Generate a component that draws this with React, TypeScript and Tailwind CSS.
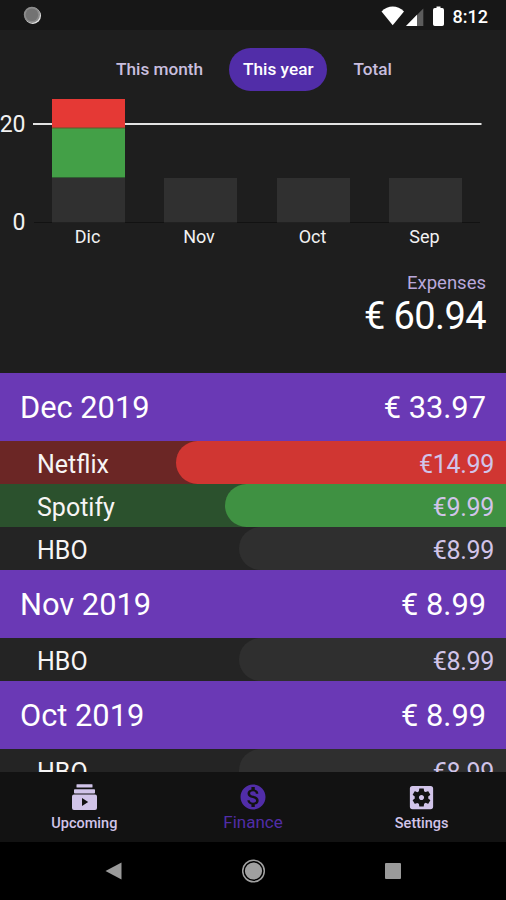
import { useState, type ReactNode } from 'react'
import { MdMonetizationOn, MdSettingsApplications } from 'react-icons/md'

interface Expense {
  name: string
  price: string
  rowClass: string
  pillClass: string
}

interface MonthGroup {
  label: string
  total: string
  expenses: Expense[]
}

interface Bar {
  label: string
  x: number
  labelX: number
}

const netflix: Expense = {
  name: 'Netflix',
  price: '€14.99',
  rowClass: 'bg-[#6b2625]',
  pillClass: 'w-[330px] bg-[#d03632]',
}

const spotify: Expense = {
  name: 'Spotify',
  price: '€9.99',
  rowClass: 'bg-[#2b512d]',
  pillClass: 'w-[281px] bg-[#3f9142]',
}

const hbo: Expense = {
  name: 'HBO',
  price: '€8.99',
  rowClass: 'bg-[#242424]',
  pillClass: 'w-[267px] bg-[#2f2f2f]',
}

const months: MonthGroup[] = [
  { label: 'Dec 2019', total: '€ 33.97', expenses: [netflix, spotify, hbo] },
  { label: 'Nov 2019', total: '€ 8.99', expenses: [hbo] },
  { label: 'Oct 2019', total: '€ 8.99', expenses: [hbo] },
]

const bars: Bar[] = [
  { label: 'Dic', x: 52, labelX: 87.5 },
  { label: 'Nov', x: 164, labelX: 199 },
  { label: 'Oct', x: 277, labelX: 312.5 },
  { label: 'Sep', x: 389, labelX: 424.5 },
]

const periods = ['This month', 'This year', 'Total']

function SubscriptionsIcon() {
  return (
    <svg width="30" height="30" viewBox="0 0 30 30" fill="currentColor">
      <rect x="7.500" y="2.200" width="16" height="3.200" rx="0.500" />
      <rect x="5" y="7.300" width="21" height="4.200" rx="0.800" />
      <path
        fillRule="evenodd"
        d="M5 12.500h21q2 0 2 2v11.500q0 2-2 2H5q-2 0-2-2V14.500q0-2 2-2zM13 16v8l6.200-4z"
      />
    </svg>
  )
}

function StatusBar() {
  return (
    <header className="flex h-[30px] shrink-0 items-center justify-between bg-[#171717] pl-[23px] pr-[18px]">
      <svg width="19" height="19" viewBox="0 0 19 19">
        <circle cx="9.8" cy="9.7" r="8.2" fill="#e4e4e4" />
        <circle cx="8.9" cy="8.8" r="8.1" fill="#8c8c8c" />
        <circle cx="8.9" cy="8.8" r="6.3" fill="#737373" />
      </svg>
      <div className="flex items-center">
        <svg width="63" height="22" viewBox="0 0 63 22" className="mt-px mr-[9px]">
          <path d="M0.500 6.600C7-0.200 16.500-0.200 23 6.600L11.700 20.300Z" fill="#fff" />
          <path d="M42.300 3.500V21H25Z" fill="#5c5c5c" />
          <path d="M36 9.800V21H25Z" fill="#fff" />
          <path d="M55.500 1.600h4v1.500h1.700q1.800 0 1.800 1.800v14.300q0 1.800-1.800 1.800h-7.400q-1.800 0-1.800-1.800V4.900q0-1.800 1.800-1.800h1.700z" fill="#fff" />
        </svg>
        <span className="pt-[3px] text-[18px] leading-none font-medium text-white">8:12</span>
      </div>
    </header>
  )
}

function ExpensesChart() {
  return (
    <svg width="506" height="160" viewBox="0 0 506 160" className="block shrink-0">
      <line x1="33" x2="481.500" y1="29" y2="29" stroke="#e3e3e3" strokeWidth="2" />
      <line x1="34" x2="480" y1="127.500" y2="127.500" stroke="#121212" strokeWidth="1" />
      <text x="25.500" y="37" textAnchor="end" fontSize="23" fill="#f2f2f2">20</text>
      <text x="25.500" y="135" textAnchor="end" fontSize="23" fill="#f2f2f2">0</text>
      {bars.map((bar) => (
        <g key={bar.label}>
          <rect x={bar.x} y="83" width="73" height="44.500" fill="#303030" />
          <text x={bar.labelX} y="148" textAnchor="middle" fontSize="18" fill="#f2f2f2">
            {bar.label}
          </text>
        </g>
      ))}
      <rect x="52" y="4" width="73" height="29" fill="#e53935" />
      <rect x="52" y="33" width="73" height="49.500" fill="#43a047" />
      <line x1="52" x2="125" y1="33" y2="33" stroke="#5a5a2c" strokeWidth="1" />
    </svg>
  )
}

function MonthSection({ group }: { group: MonthGroup }) {
  return (
    <section className="shrink-0">
      <h2 className="flex h-[68px] items-center justify-between bg-[#6a39b5] px-[20px] pt-[3px] text-[30.800px] text-white">
        <span>{group.label}</span>
        <span>{group.total}</span>
      </h2>
      {group.expenses.map((expense) => (
        <div key={expense.name} className={`flex h-[43px] items-center justify-between pl-[37px] text-[25px] ${expense.rowClass}`}>
          <span className="pt-[4px] text-[#f7f5f5]">{expense.name}</span>
          <div className={`flex h-full items-center justify-end rounded-l-full pt-[4px] pr-[12px] tracking-[-0.3px] text-[#d1c4e9] ${expense.pillClass}`}>
            {expense.price}
          </div>
        </div>
      ))}
    </section>
  )
}

function TabItem({ icon, label, active }: { icon: ReactNode; label: string; active?: boolean }) {
  return (
    <button
      type="button"
      className={
        active
          ? 'flex flex-1 flex-col items-center pt-[10px] text-[17px] leading-[20px] text-[#512da8]'
          : 'flex flex-1 flex-col items-center pt-[10px] text-[14.500px] leading-[23px] font-medium text-[#d1c4e9]'
      }
    >
      {icon}
      {label}
    </button>
  )
}

export default function App() {
  const [period, setPeriod] = useState('This year')

  return (
    <div className="flex h-[900px] w-[506px] flex-col overflow-hidden bg-[#1e1e1e] font-['Roboto',sans-serif]">
      <StatusBar />

      <div className="flex h-[65px] shrink-0 items-start pt-[18px] pl-[102px]">
        {periods.map((item) => (
          <button
            key={item}
            type="button"
            onClick={() => setPeriod(item)}
            className={
              item === period
                ? 'mr-[12px] ml-[12px] h-[43px] rounded-full bg-[#512da8] px-[14px] text-[17.200px] font-medium text-white'
                : 'h-[43px] px-[14px] text-[17.200px] font-medium text-[#c9bedf]'
            }
          >
            {item}
          </button>
        ))}
      </div>

      <ExpensesChart />

      <div className="flex h-[118px] shrink-0 flex-col items-end pt-[17px] pr-[20px]">
        <span className="text-[18.500px] leading-[22px] text-[#b9a8dc]">Expenses</span>
        <span className="text-[38px] leading-[44px] tracking-[-0.6px] text-white">€ 60.94</span>
      </div>

      <main className="flex min-h-0 flex-1 flex-col overflow-hidden">
        {months.map((group) => (
          <MonthSection key={group.label} group={group} />
        ))}
      </main>

      <nav className="flex h-[70px] shrink-0 bg-[#121212]">
        <TabItem icon={<SubscriptionsIcon />} label="Upcoming" />
        <TabItem icon={<MdMonetizationOn size={30} />} label="Finance" active />
        <TabItem icon={<MdSettingsApplications size={31} className="-mb-px" />} label="Settings" />
      </nav>

      <footer className="flex h-[58px] shrink-0 items-center justify-between bg-black pr-[105px] pl-[105px]">
        <svg width="17" height="18" viewBox="0 0 17 18">
          <path d="M16.500 0.500v17L0.500 9z" fill="#9a9a9a" />
        </svg>
        <svg width="24" height="24" viewBox="0 0 24 24">
          <circle cx="11.500" cy="12" r="10.800" fill="none" stroke="#a0a0a0" strokeWidth="1.500" />
          <circle cx="11.500" cy="12" r="8.600" fill="#a0a0a0" />
        </svg>
        <div className="size-[16px] rounded-[1px] bg-[#9a9a9a]" />
      </footer>
    </div>
  )
}
